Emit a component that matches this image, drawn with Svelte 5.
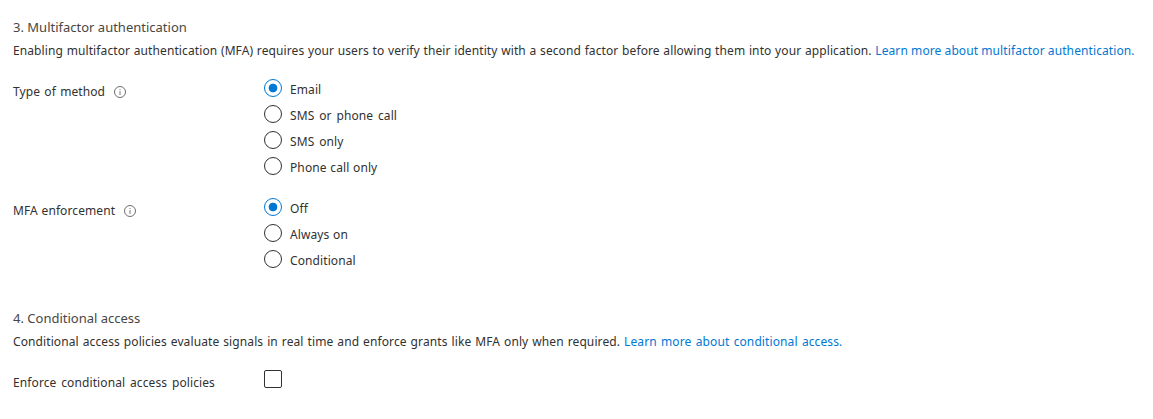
<script>
  const methods = ['Email', 'SMS or phone call', 'SMS only', 'Phone call only'];
  const enforcement = ['Off', 'Always on', 'Conditional'];
  let method = $state('Email');
  let mfa = $state('Off');
</script>

{#snippet info()}
  <svg class="info" width="12" height="12" viewBox="0 0 12 12" aria-hidden="true">
    <circle cx="6" cy="6" r="5.5" fill="none" stroke="#605e5c" stroke-width=".9" />
    <path d="M6 5v4M6 3v1" stroke="#797775" fill="none" />
  </svg>
{/snippet}

{#snippet radio(name, label, checked, pick)}
  <label class="option" class:wide={label.startsWith('SMS')}>
    <input type="radio" {name} {checked} onchange={pick} />
    <span>{label}</span>
  </label>
{/snippet}

<main>
  <section class="mfa">
    <h2>3. Multifactor authentication</h2>
    <p><span>Enabling multifactor authentication (MFA) requires your users to verify their identity with a second factor before allowing them into your application.</span> <a href="#mfa">Learn more about multifactor authentication.</a></p>
    <div class="field first">
      <div class="label"><span>Type of method</span>{@render info()}</div>
      <div class="options">
        {#each methods as m}{@render radio('method', m, method === m, () => (method = m))}{/each}
      </div>
    </div>
    <div class="field second">
      <div class="label"><span>MFA enforcement</span>{@render info()}</div>
      <div class="options">
        {#each enforcement as m}{@render radio('mfa', m, mfa === m, () => (mfa = m))}{/each}
      </div>
    </div>
  </section>
  <section class="access">
    <h2>4. Conditional access</h2>
    <p><span>Conditional access policies evaluate signals in real time and enforce grants like MFA only when required.</span> <a href="#ca">Learn more about conditional access.</a></p>
    <div class="field third">
      <div class="label"><span>Enforce conditional access policies</span></div>
      <input type="checkbox" aria-label="Enforce conditional access policies" />
    </div>
  </section>
</main>

<style>
  :global(body) { background: #fff; }
  main { box-sizing: border-box; height: 419px; padding: 17px 0 0 13px; font: 12px/20px "Noto Sans", sans-serif; color: #323130; white-space: nowrap; overflow: hidden; letter-spacing: .1px; word-spacing: .45px; }
  h2 { margin: 0; font: 400 13px/20px "Noto Sans", sans-serif; color: #484644; letter-spacing: 0; word-spacing: 0; }
  p { margin: 4px 0 0; }
  a { color: #0078d4; text-decoration: none; }
  .mfa a { word-spacing: -.1px; }
  .field { display: flex; }
  .first { margin-top: 18px; }
  .first .label { word-spacing: 1px; }
  .second { margin-top: 15px; }
  .label { display: flex; align-items: center; width: 251px; height: 20px; padding-top: 3px; }
  .info { margin-left: 9px; }
  .option { display: flex; align-items: flex-start; height: 26px; }
  .option span { padding-top: 1px; line-height: 20px; }
  .wide { word-spacing: 1.6px; }
  input { appearance: none; box-sizing: border-box; width: 18px; height: 18px; margin: 0 8px 0 0; border: 1px solid #323130; background: #fff; }
  input[type='radio'] { border-radius: 50%; }
  input[type='radio']:checked { border-color: #0078d4; background: radial-gradient(circle, #0078d4 0 4px, #fff 4.7px); }
  input[type='checkbox'] { border-radius: 2px; }
  .access { margin-top: 32px; word-spacing: .75px; }
  .access a { word-spacing: 1.1px; }
  .third { margin-top: 18px; word-spacing: 1.6px; }
</style>
